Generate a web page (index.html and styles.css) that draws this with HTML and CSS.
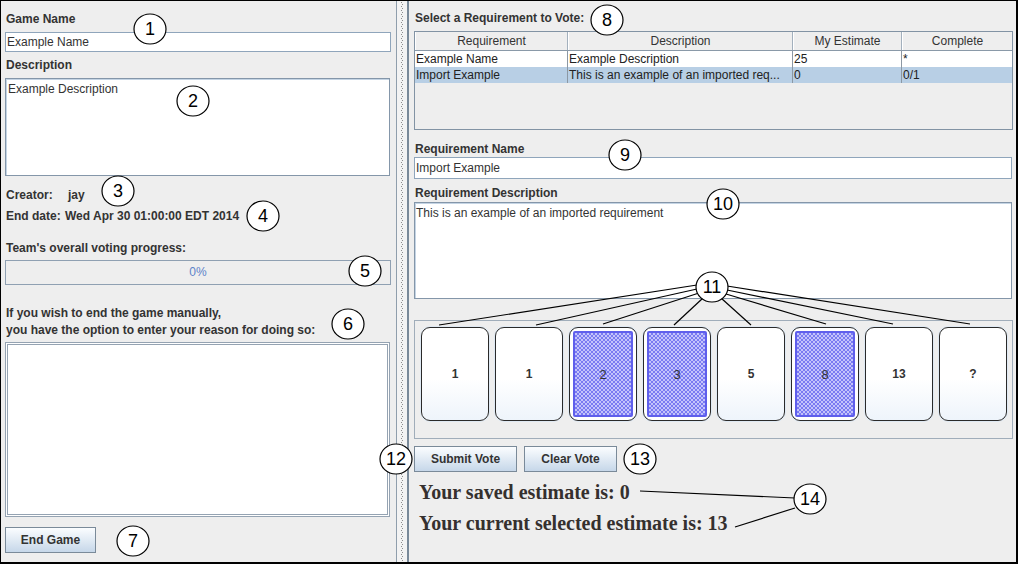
FILE: index.html
```html
<!DOCTYPE html>
<html>
<head>
<meta charset="utf-8">
<title>Planning Poker</title>
<link rel="stylesheet" href="styles.css">
</head>
<body>
<div class="frame">
  <div class="left">
    <div class="lbl l-game">Game Name</div>
    <div class="field f-game">Example Name</div>
    <div class="lbl l-desc">Description</div>
    <div class="area a-desc">Example Description</div>
    <div class="lbl l-creator"><span class="key k-creator">Creator:</span>jay</div>
    <div class="lbl l-end"><span class="key k-end">End date:</span>Wed Apr 30 01:00:00 EDT 2014</div>
    <div class="lbl l-team">Team's overall voting progress:</div>
    <div class="progress">0%</div>
    <div class="lbl2 l-reason">If you wish to end the game manually,<br>you have the option to enter your reason for doing so:</div>
    <div class="area2"></div>
    <div class="btn b-end">End Game</div>
  </div>
  <div class="divider">
    <div class="sp-l"></div>
    <div class="sp-dots"></div>
    <div class="sp-r"></div>
  </div>
  <div class="right">
    <div class="lbl r-select">Select a Requirement to Vote:</div>
    <div class="table">
      <div class="thead">
        <div class="th c1">Requirement</div>
        <div class="th c2">Description</div>
        <div class="th c3">My Estimate</div>
        <div class="th c4">Complete</div>
      </div>
      <div class="tr">
        <div class="td c1">Example Name</div>
        <div class="td c2">Example Description</div>
        <div class="td c3">25</div>
        <div class="td c4">*</div>
      </div>
      <div class="tr sel">
        <div class="td c1">Import Example</div>
        <div class="td c2">This is an example of an imported req...</div>
        <div class="td c3">0</div>
        <div class="td c4">0/1</div>
      </div>
    </div>
    <div class="lbl r-name">Requirement Name</div>
    <div class="field f-req">Import Example</div>
    <div class="lbl r-desc">Requirement Description</div>
    <div class="area a-req">This is an example of an imported requirement</div>
    <div class="cards">
      <div class="card"><span>1</span></div>
      <div class="card"><span>1</span></div>
      <div class="card back"><div class="pat"><span>2</span></div></div>
      <div class="card back"><div class="pat"><span>3</span></div></div>
      <div class="card"><span>5</span></div>
      <div class="card back"><div class="pat"><span>8</span></div></div>
      <div class="card"><span>13</span></div>
      <div class="card"><span>?</span></div>
    </div>
    <div class="btnrow">
      <div class="btn b-submit">Submit Vote</div>
      <div class="btn b-clear">Clear Vote</div>
    </div>
    <div class="est e1">Your saved estimate is: 0</div>
    <div class="est e2">Your current selected estimate is: 13</div>
  </div>

  <svg class="notes" width="1018" height="564" viewBox="0 0 1018 564">
    <g stroke="#000" stroke-width="1.2" fill="none">
      <line x1="697" y1="285" x2="439" y2="325"/>
      <line x1="697" y1="289" x2="536" y2="325"/>
      <line x1="699" y1="293" x2="603" y2="324"/>
      <line x1="703" y1="298" x2="674" y2="325"/>
      <line x1="721" y1="298" x2="751" y2="325"/>
      <line x1="726" y1="294" x2="826" y2="324"/>
      <line x1="727" y1="290" x2="893" y2="324"/>
      <line x1="727" y1="286" x2="970" y2="324"/>
      <line x1="640" y1="491" x2="795" y2="498"/>
      <line x1="735" y1="527" x2="795" y2="508"/>
    </g>
    <g class="badge"><ellipse cx="150" cy="29" rx="16" ry="15"/><text x="150" y="35">1</text></g>
    <g class="badge"><ellipse cx="193" cy="101" rx="16" ry="15"/><text x="193" y="107">2</text></g>
    <g class="badge"><ellipse cx="118" cy="191" rx="16" ry="15"/><text x="118" y="197">3</text></g>
    <g class="badge"><ellipse cx="263" cy="216" rx="16" ry="15"/><text x="263" y="222">4</text></g>
    <g class="badge"><ellipse cx="365" cy="271" rx="16" ry="15"/><text x="365" y="277">5</text></g>
    <g class="badge"><ellipse cx="348" cy="324" rx="16" ry="15"/><text x="348" y="330">6</text></g>
    <g class="badge"><ellipse cx="133" cy="541" rx="16" ry="15"/><text x="133" y="547">7</text></g>
    <g class="badge"><ellipse cx="607" cy="20" rx="16" ry="15"/><text x="607" y="26">8</text></g>
    <g class="badge"><ellipse cx="625" cy="155" rx="16" ry="15"/><text x="625" y="161">9</text></g>
    <g class="badge"><ellipse cx="723" cy="204" rx="16" ry="15"/><text x="723" y="210">10</text></g>
    <g class="badge"><ellipse cx="712" cy="287" rx="16" ry="15"/><text x="712" y="293">11</text></g>
    <g class="badge"><ellipse cx="396" cy="459" rx="16" ry="15"/><text x="396" y="465">12</text></g>
    <g class="badge"><ellipse cx="640" cy="459" rx="16" ry="15"/><text x="640" y="465">13</text></g>
    <g class="badge"><ellipse cx="810" cy="499" rx="16" ry="15"/><text x="810" y="505">14</text></g>
  </svg>
</div>
</body>
</html>
```

FILE: styles.css
```css
html, body {
  margin: 0;
  padding: 0;
  background: #ffffff;
}

body {
  font-family: "Liberation Sans", Arial, sans-serif;
  font-size: 12px;
  color: #333333;
}

.frame {
  position: relative;
  width: 1018px;
  height: 564px;
  box-sizing: border-box;
  border-style: solid;
  border-color: #000000;
  border-width: 1px 2px 2px 1px;
  background: #eeeeee;
  display: flex;
  overflow: hidden;
}

/* ---------- left panel ---------- */
.left {
  width: 395px;
  flex: none;
  box-sizing: border-box;
  padding: 0 5px 0 4px;
  display: flex;
  flex-direction: column;
}

.lbl {
  font-weight: bold;
  line-height: 14px;
  height: 14px;
  padding-left: 1px;
  white-space: nowrap;
}

.lbl2 {
  font-weight: bold;
  line-height: 17px;
  padding-left: 1px;
  white-space: nowrap;
}

.key {
  display: inline-block;
}

.k-creator { width: 62px; }
.k-end { width: 59px; }

.l-game { margin-top: 11px; }
.f-game { margin-top: 6px; width: 386px; border-color: #a9bfd5; }
.l-desc { margin-top: 6px; }
.a-desc { margin-top: 6px; width: 385px; height: 98px; }
.l-creator { margin-top: 12px; }
.l-end { margin-top: 7px; }
.l-team { margin-top: 18px; }
.l-reason { margin-top: 20px; }

.field {
  height: 20px;
  box-sizing: border-box;
  border: 1px solid #8fa5bb;
  background: #ffffff;
  line-height: 18px;
  padding-left: 1px;
  color: #333333;
  white-space: nowrap;
}

.area {
  box-sizing: border-box;
  border: 1px solid #8496a9;
  box-shadow: inset 1px 1px 0 #c4d4e4;
  background: #ffffff;
  line-height: 16px;
  padding: 2px 2px;
  color: #333333;
}

.progress {
  margin-top: 5px;
  width: 386px;
  height: 25px;
  box-sizing: border-box;
  border: 1px solid #8fa0b2;
  background: #eeeeee;
  text-align: center;
  line-height: 23px;
  color: #5d83c9;
}

.area2 {
  margin-top: 3px;
  width: 385px;
  height: 175px;
  box-sizing: border-box;
  border: 3px double #95a3b2;
  background: #ffffff;
}

.btn {
  height: 26px;
  box-sizing: border-box;
  border: 1px solid #7a8a99;
  background: linear-gradient(#fbfdff 0%, #e6eef6 40%, #c6d7e9 100%);
  font-weight: bold;
  text-align: center;
  line-height: 24px;
  color: #333333;
}

.b-end {
  margin-top: 10px;
  width: 91px;
}

/* ---------- splitter ---------- */
.divider {
  width: 13px;
  flex: none;
  display: flex;
}

.sp-l {
  width: 1px;
  background: #8f9eac;
}

.sp-dots {
  width: 10px;
  background-color: #f3f3f3;
  background-image:
    linear-gradient(#8c8c8c 0 1px, transparent 1px),
    linear-gradient(#8c8c8c 0 1px, transparent 1px);
  background-size: 1px 4px, 1px 4px;
  background-position: 4px 1px, 5px 3px;
  background-repeat: repeat-y, repeat-y;
}

.sp-r {
  width: 2px;
  background: #7a8a99;
}

/* ---------- right panel ---------- */
.right {
  flex: 1;
  box-sizing: border-box;
  padding: 0 5px;
  display: flex;
  flex-direction: column;
}

.r-select { margin-top: 10px; }

.table {
  margin-top: 6px;
  width: 599px;
  height: 99px;
  box-sizing: border-box;
  border: 1px solid #8293a4;
  background: #eeeeee;
}

.thead {
  display: flex;
  height: 19px;
  box-sizing: border-box;
  border-bottom: 1px solid #8a99a8;
}

.th {
  box-sizing: border-box;
  text-align: center;
  line-height: 18px;
  border-right: 1px solid #a3b0bd;
  border-left: 1px solid #ffffff;
  background: #eeeeee;
  color: #333333;
}

.tr {
  display: flex;
  height: 16px;
  background: #ffffff;
}

.tr.sel {
  background: #b8cfe5;
}

.td {
  box-sizing: border-box;
  line-height: 16px;
  padding-left: 1px;
  border-right: 1px solid #8c98a4;
  white-space: nowrap;
  overflow: hidden;
  color: #222222;
}

.c1 { width: 153px; }
.c2 { width: 225px; }
.c3 { width: 109px; }
.c4 { width: 110px; border-right: none; }

.r-name { margin-top: 12px; }
.f-req { margin-top: 1px; width: 598px; height: 22px; line-height: 20px; }
.r-desc { margin-top: 7px; }
.a-req { margin-top: 2px; width: 598px; height: 97px; padding-left: 1px; }

.cards {
  margin-top: 21px;
  width: 599px;
  height: 119px;
  box-sizing: border-box;
  border: 1px solid #a0adba;
  padding: 6px 0 0 6px;
  display: flex;
  gap: 6px;
  align-items: flex-start;
}

.card {
  width: 68px;
  height: 94px;
  box-sizing: border-box;
  border: 1px solid #2a2a2a;
  border-radius: 9px;
  background: linear-gradient(#ffffff 55%, #eef4fb 100%);
  display: flex;
  align-items: center;
  justify-content: center;
  font-weight: bold;
  color: #333333;
  box-shadow: 0 0 0 1px #dfe9f3;
}

.card.back {
  padding: 3px;
  align-items: stretch;
  justify-content: stretch;
  background: #ffffff;
}

.pat {
  flex: 1;
  border: 2px solid #5f5fec;
  border-radius: 2px;
  background-color: #b8b8fa;
  background-image: repeating-conic-gradient(#7a7af2 0 25%, #c4c4fb 0 50%);
  background-size: 4px 4px;
  display: flex;
  align-items: center;
  justify-content: center;
  color: #333333;
  font-weight: normal;
  font-size: 13px;
}

.btnrow {
  margin-top: 7px;
  display: flex;
  gap: 7px;
}

.b-submit { width: 103px; }
.b-clear { width: 93px; }

.est {
  font-family: "Liberation Serif", "Times New Roman", serif;
  font-weight: bold;
  font-size: 20px;
  line-height: 24px;
  padding-left: 5px;
  color: #35302e;
  white-space: nowrap;
}

.e1 { margin-top: 8px; }
.e2 { margin-top: 7px; }

/* ---------- annotation overlay ---------- */
.notes {
  position: absolute;
  left: -1px;
  top: -1px;
  pointer-events: none;
}

.badge ellipse {
  fill: #ffffff;
  stroke: #000000;
  stroke-width: 1.2;
}

.badge text {
  font-family: "Liberation Sans", Arial, sans-serif;
  font-size: 18px;
  fill: #000000;
  text-anchor: middle;
}
```
